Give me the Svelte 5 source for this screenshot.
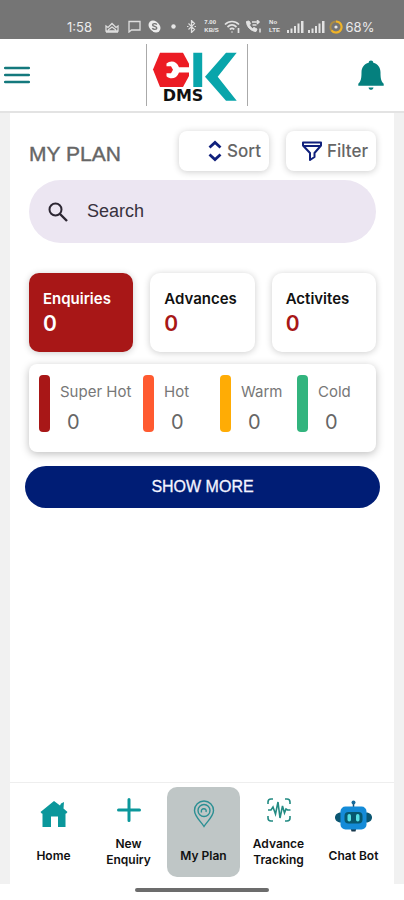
<script lang="ts">
  const tabs = [
    { label: "Enquiries", count: 0 },
    { label: "Advances", count: 0 },
    { label: "Activites", count: 0 },
  ];

  const leads = [
    { label: "Super Hot", count: 0, tone: "super-hot" },
    { label: "Hot", count: 0, tone: "hot" },
    { label: "Warm", count: 0, tone: "warm" },
    { label: "Cold", count: 0, tone: "cold" },
  ];

  let activeTab = $state("Enquiries");
  let query = $state("");
</script>

{#snippet signal()}
  <svg width="17" height="13" viewBox="0 0 17 13" fill="#e2e2e2">
    <path d="M0 10h2v3H0zM3.5 8.500h2V13h-2zM7 6h2v7H7zM10.500 3.500h2V13h-2zM14 1h2.500v12H14z" />
  </svg>
{/snippet}

<div class="screen">
  <div class="status">
    <span class="time">1:58</span>
    <svg width="14" height="12" viewBox="0 0 14 12" fill="none" stroke="#dedede" stroke-width="1.300">
      <path d="M1 5l2 1.500 4-4 4 4L13 5v5H1zM3 9l4-3 4 3M1 11h12" />
    </svg>
    <svg width="13" height="13" viewBox="0 0 13 13" fill="none" stroke="#dedede" stroke-width="1.300">
      <path d="M1 12V1.500h11v8.500H3.500z" />
    </svg>
    <svg width="13" height="13" viewBox="0 0 13 13">
      <circle cx="5" cy="5" r="4.500" fill="#ececec" />
      <circle cx="8" cy="8" r="4.500" fill="#ececec" />
      <circle cx="6.500" cy="6.500" r="5" fill="#ececec" />
      <path d="M8.800 4.600C8 3.200 4.600 3.300 4.600 5s4.200 1.200 4.200 3c0 1.800-3.600 1.800-4.500.2" fill="none" stroke="#757575" stroke-width="1.400" />
    </svg>
    <svg width="5" height="5" viewBox="0 0 5 5"><circle cx="2.500" cy="2.500" r="2.200" fill="#e6e6e6" /></svg>
    <svg width="9" height="13" viewBox="0 0 9 13" fill="none" stroke="#dedede" stroke-width="1.200">
      <path d="M1.500 3.500l6 6-3 3V.500l3 3-6 6M0 6.500h1.500M7.500 6.500H9" />
    </svg>
    <span class="tiny"><span>7.00</span><span>KB/S</span></span>
    <svg width="17" height="13" viewBox="0 0 17 13" fill="none" stroke="#e2e2e2" stroke-width="1.700">
      <path d="M1 4.500c4-4 10-4 14 0M3.500 7c3-2.700 6-2.700 9 0M5.800 9.400c1.500-1.300 3-1.300 4.500 0" />
      <path d="M8 11.500v1M14.500 8v5" />
    </svg>
    <svg width="17" height="13" viewBox="0 0 17 13" fill="none" stroke="#e2e2e2">
      <path d="M1.500 1.500c0 5 4 9.500 9.500 10l1-2.500-3-1.500-1.500 1C6 7.500 5 6 4.500 5l1-1.500L4 1z" fill="#e2e2e2" />
      <path d="M7 2h7M12 0l2 2-2 2M7.500 5h4M15 8.500v4" stroke-width="1.500" />
    </svg>
    <span class="tiny"><span>No</span><span>LTE</span></span>
    {@render signal()}
    {@render signal()}
    <svg width="14" height="14" viewBox="0 0 14 14" fill="none" stroke-width="2">
      <circle cx="7" cy="7" r="5.600" stroke="#a98b48" />
      <path d="M7 1.400a5.600 5.600 0 1 1-4.500 9" stroke="#f0b429" />
      <circle cx="7" cy="7" r="1.600" fill="#e8e8e8" />
    </svg>
    <span class="battery">68%</span>
  </div>

  <header class="topbar">
    <button class="icon-button" aria-label="Menu">
      <svg width="26" height="18" viewBox="0 0 26 18" stroke="#14797d" stroke-width="2.500" stroke-linecap="round">
        <path d="M1.200 2h23.600M1.200 9h23.600M1.200 16h23.600" />
      </svg>
    </button>
    <div class="logo">
      <svg width="100" height="62" viewBox="1 0 100 62">
        <path d="M7 25.500L14 8.700h23l6 11V32l-6 11H14z" fill="#ec1c24" />
        <path d="M20.500 19.500c4-3.500 10.500-2.500 12.500 3.700h11v5.300H33c-2 6.200-8.500 7.500-12.500 3.800v-3h4.500l2-3.500-2-3.500h-4.500z" fill="#fff" />
        <path d="M47.300 8.700h8.900V43h-8.900zM80 8.700h10.700L71.700 32.700l19 24H80l-21-24z" fill="#09a5ab" />
        <text x="37" y="57" text-anchor="middle" class="logo-text">DMS</text>
      </svg>
    </div>
    <button class="icon-button bell" aria-label="Notifications">
      <svg width="26" height="30" viewBox="0 0 26 30" fill="#05807e">
        <path d="M13 .500c1.300 0 2.200.8 2.300 2.200 4.600 1.200 7.200 4.900 7.200 9.500 0 5.600.5 9 3.200 11.500v2.100H.300v-2.100C3 21.200 3.500 17.800 3.500 12.200c0-4.600 2.600-8.300 7.200-9.500C10.800 1.300 11.700.500 13 .500zM10.500 27.500h5c-.3 1.600-1.200 2.300-2.500 2.300s-2.200-.7-2.500-2.300z" />
      </svg>
    </button>
  </header>

  <div class="body">
    <main>
      <div class="heading">
        <h1>MY PLAN</h1>
        <button class="tool">
          <svg width="14" height="22" viewBox="0 0 14 22" fill="none" stroke="#10207c" stroke-width="2.800">
            <path d="M1.500 7.500L7 2.500l5.500 5M1.500 14.500l5.500 5 5.500-5" />
          </svg>
          Sort
        </button>
        <button class="tool">
          <svg width="20" height="20" viewBox="0 0 20 20" fill="none" stroke="#10207c" stroke-width="2" stroke-linejoin="round">
            <path d="M1 1.500h18v3L12.500 12v4L8 19v-7L1 4.500zM2 5h16" />
          </svg>
          Filter
        </button>
      </div>

      <label class="search">
        <svg width="20" height="20" viewBox="0 0 20 20" fill="none" stroke="#2c2632" stroke-width="2">
          <circle cx="7.500" cy="7.500" r="6" />
          <path d="M12 12l7 7" stroke-width="2.400" />
        </svg>
        <input type="text" placeholder="Search" aria-label="Search" bind:value={query} />
      </label>

      <div class="tabs">
        {#each tabs as tab}
          <button class="tab" class:active={activeTab === tab.label} onclick={() => (activeTab = tab.label)}>
            <span>{tab.label}</span>
            <strong>{tab.count}</strong>
          </button>
        {/each}
      </div>

      <div class="leads">
        {#each leads as lead}
          <div class="lead">
            <i class="bar {lead.tone}"></i>
            <div>
              <span>{lead.label}</span>
              <b>{lead.count}</b>
            </div>
          </div>
        {/each}
      </div>

      <button class="more">SHOW MORE</button>
    </main>

    <nav>
      <a href="#home" class="short">
        <svg width="28" height="28" viewBox="0 0 28 28" fill="#0b979b">
          <path d="M14 1l6 4.500 1-2 3-1.500-.5 6.500 4 3.500-1.500 1.800-.5-.4V27h-7.500V16.500h-7V27H2.500V13.400l-.5.4L.500 12z" />
        </svg>
        <span>Home</span>
      </a>
      <a href="#new-enquiry">
        <svg width="24" height="24" viewBox="0 0 24 24" stroke="#0b979b" stroke-width="3" stroke-linecap="round">
          <path d="M12 1.500v21M1.500 12h21" />
        </svg>
        <span>New<br />Enquiry</span>
      </a>
      <a href="#my-plan" class="short current" aria-current="page">
        <svg width="22" height="28" viewBox="0 0 22 28" fill="none" stroke="#2b8f93" stroke-width="1.400">
          <path d="M11 26.500C8 21.500 1.500 16.500 1.500 10.500a9.500 9.500 0 0 1 19 0c0 6-6.500 11-9.500 16z" />
          <circle cx="11" cy="10.500" r="6" />
          <path d="M8.500 12.500c-1.500-5 6-5 4.500-.500" />
        </svg>
        <span>My Plan</span>
      </a>
      <a href="#tracking">
        <svg width="24" height="24" viewBox="0 0 24 24" fill="none" stroke="#238b83" stroke-width="1.600">
          <path d="M1 6V4a3 3 0 0 1 3-3h2M18 1h2a3 3 0 0 1 3 3v2M23 18v2a3 3 0 0 1-3 3h-2M6 23H4a3 3 0 0 1-3-3v-2" />
          <path d="M1 12h3l2-3 2.500 7 2.500-12 2 16 2.500-12 2 7 1.500-4 1.500 1h3" />
        </svg>
        <span>Advance<br />Tracking</span>
      </a>
      <a href="#chat-bot" class="short">
        <svg width="39" height="32" viewBox="0 0 39 32">
          <path d="M19.500 2v6" stroke="#174d73" stroke-width="1.500" />
          <circle cx="19.500" cy="2.500" r="2" fill="#176b9c" />
          <path d="M7 12.500c-8 0-8 10 0 10zM32 12.500c8 0 8 10 0 10z" fill="#0b5672" />
          <path d="M16.500 28h6l-1 3.500h-4z" fill="#18384c" />
          <rect x="6.500" y="6.500" width="26" height="23" rx="5" fill="#148bd8" />
          <rect x="10.500" y="12" width="18" height="11.500" rx="4" fill="#07586f" />
          <rect x="13.500" y="14" width="3.500" height="7.500" rx="1.700" fill="#55e0e4" />
          <rect x="22" y="14" width="3.500" height="7.500" rx="1.700" fill="#55e0e4" />
        </svg>
        <span>Chat Bot</span>
      </a>
    </nav>
  </div>

  <div class="gesture"><i></i></div>
</div>

<style>
  :global(body) {
    margin: 0;
    background: #fff;
  }

  .screen {
    display: flex;
    flex-direction: column;
    min-height: 100vh;
    font-family: Inter, "Liberation Sans", sans-serif;
    color: #111;
  }

  button {
    font-family: inherit;
    border: 0;
    padding: 0;
    background: none;
    cursor: pointer;
  }

  svg {
    display: block;
    flex: none;
  }

  .status {
    display: grid;
    grid-template-columns: 33px 24px 20px 20px 18px 19px repeat(6, 21px) 17px 32px;
    justify-content: end;
    align-items: center;
    justify-items: center;
    box-sizing: border-box;
    height: 39px;
    padding: 14px 28px 0 0;
    background: #757575;
    color: #ebebeb;
    font-size: 13px;
  }

  .time {
    justify-self: start;
  }

  .tiny {
    display: grid;
    gap: 1px;
    font: bold 6px "Liberation Sans", sans-serif;
    line-height: 7px;
  }

  .topbar {
    display: grid;
    grid-template-columns: 1fr auto 1fr;
    align-items: center;
    height: 72px;
    padding: 0 20px 0 4px;
    border-bottom: 2px solid #e3e3e3;
  }

  .icon-button {
    justify-self: start;
  }

  .bell {
    justify-self: end;
  }

  .logo {
    margin-left: 6px;
    border: solid #aaa;
    border-width: 0 1px;
  }

  .logo-text {
    font: bold 16px "DejaVu Sans", sans-serif;
    fill: #111;
  }

  .body {
    flex: 1;
    display: flex;
    flex-direction: column;
    padding: 0 10px;
    background: #f1f1f1;
  }

  main {
    flex: 1;
    padding: 18px 18px 18px 19px;
    background: #fff;
  }

  .heading {
    display: flex;
    gap: 17px;
    align-items: center;
  }

  h1 {
    flex: 1;
    margin: 6px 0 0;
    font: 500 21px "Liberation Sans", sans-serif;
    color: #666;
    -webkit-text-stroke: 0.4px #666;
  }

  .tool {
    display: flex;
    align-items: center;
    justify-content: flex-end;
    gap: 5px;
    box-sizing: border-box;
    width: 90px;
    height: 40px;
    padding-right: 8px;
    border-radius: 8px;
    background: #fff;
    box-shadow: 0 1px 7px rgba(0, 0, 0, 0.2);
    font-size: 17px;
    font-weight: 500;
    color: #666;
  }

  .search {
    display: flex;
    align-items: center;
    gap: 19px;
    height: 63px;
    margin-top: 9px;
    padding: 0 19px;
    border-radius: 32px;
    background: #ece6f2;
  }

  .search input {
    flex: 1;
    min-width: 0;
    border: 0;
    padding: 0;
    outline: 0;
    background: none;
    font: 18px "Liberation Sans", sans-serif;
    color: #1d1b20;
  }

  .search input::placeholder {
    color: #38323e;
    opacity: 1;
  }

  .tabs {
    display: grid;
    grid-template-columns: repeat(3, 1fr);
    gap: 17px;
    margin-top: 30px;
  }

  .tab {
    display: flex;
    flex-direction: column;
    gap: 2px;
    height: 79px;
    padding: 16px 14px 0;
    border-radius: 10px;
    background: #fff;
    box-shadow: 0 1px 7px rgba(0, 0, 0, 0.2);
    text-align: left;
    font-size: 15px;
    line-height: 20px;
    font-weight: 600;
    color: #111;
  }

  .tab strong {
    font-size: 21px;
    line-height: 26px;
    font-weight: 600;
    color: #a81717;
  }

  .tab.active,
  .tab.active strong {
    color: #fff;
  }

  .tab.active {
    background: #a81717;
  }

  .leads {
    display: grid;
    grid-template-columns: 104fr 77fr 77fr 69fr;
    margin-top: 12px;
    padding: 11px 10px 17px;
    border-radius: 8px;
    background: #fff;
    box-shadow: 0 2px 8px rgba(0, 0, 0, 0.26);
  }

  .lead {
    display: flex;
    gap: 10px;
    color: #777;
    font-size: 15px;
    white-space: nowrap;
  }

  .lead span {
    display: block;
    margin-top: 6px;
    line-height: 22px;
  }

  .lead b {
    display: block;
    margin: 6px 0 0 7px;
    font-size: 20px;
    line-height: 26px;
    font-weight: 400;
    color: #666;
  }

  .bar {
    width: 11px;
    height: 57px;
    border-radius: 4px;
  }

  .super-hot {
    background: #a81717;
  }

  .hot {
    background: #ff5a30;
  }

  .warm {
    background: #ffac05;
  }

  .cold {
    background: #32b47e;
  }

  .more {
    display: block;
    width: calc(100% + 8px);
    height: 42px;
    margin: 14px -4px 0;
    border-radius: 21px;
    background: #001d75;
    color: #f4f4ff;
    font-family: "Liberation Sans", sans-serif;
    font-size: 16px;
    -webkit-text-stroke: 0.3px #f4f4ff;
  }

  nav {
    display: grid;
    grid-template-columns: repeat(5, 1fr);
    padding: 4px 3px 7px 6px;
    border-top: 1px solid #eee;
    background: #fff;
  }

  nav a {
    display: flex;
    flex-direction: column;
    align-items: center;
    justify-content: space-between;
    box-sizing: border-box;
    height: 90px;
    padding: 11px 0 9px;
    border-radius: 10px;
    text-align: center;
    text-decoration: none;
    font-size: 12px;
    line-height: 16px;
    font-weight: 600;
    color: #111;
  }

  nav a.short {
    padding: 13px 0;
  }

  nav a.current {
    margin: 0 1px;
    background: #bfc6c6;
  }

  .gesture {
    display: flex;
    justify-content: center;
    padding: 4px 0 8px;
  }

  .gesture i {
    width: 33%;
    height: 4px;
    border-radius: 2px;
    background: #6c6c6c;
  }
</style>
